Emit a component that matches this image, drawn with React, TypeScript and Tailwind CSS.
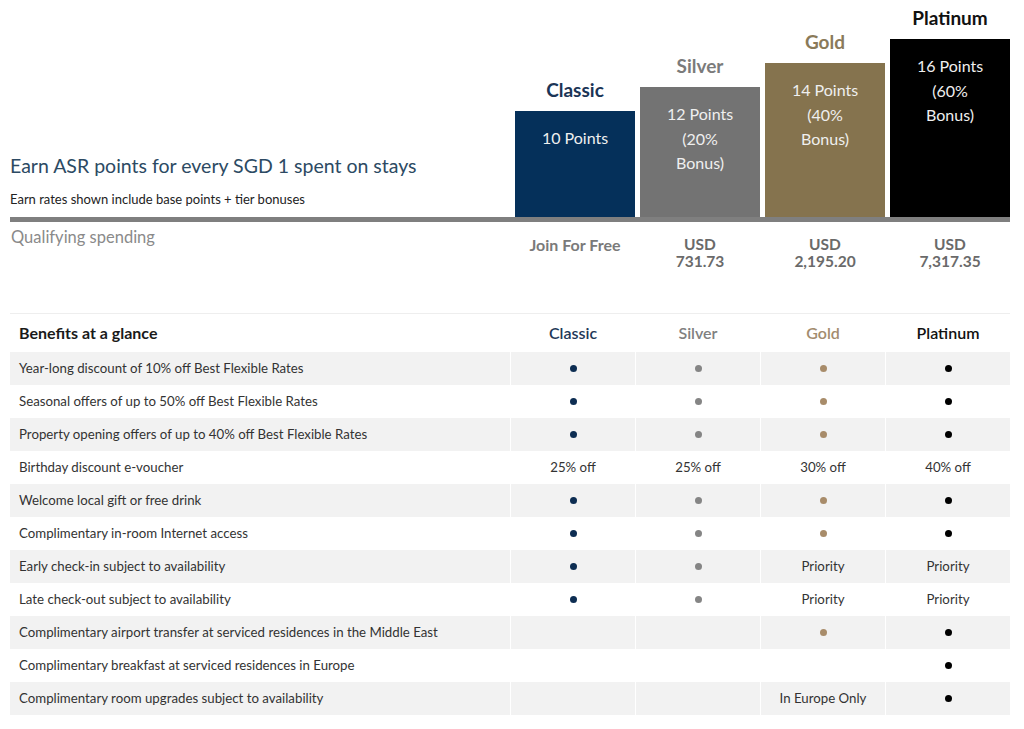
import React from "react";

type Tier = {
  name: string;
  label: string;
  head: string;
  bar: string;
  dot: string;
  points: string[];
  spend: string[];
};

const tiers: Tier[] = [
  {
    name: "Classic",
    label: "text-[#1b3556]",
    head: "text-[#1e3858]",
    bar: "bg-[#05305a] h-[106px]",
    dot: "bg-[#0d2d52]",
    points: ["10 Points"],
    spend: ["Join For Free"],
  },
  {
    name: "Silver",
    label: "text-[#7b7b7b]",
    head: "text-[#808080]",
    bar: "bg-[#737373] h-[130px]",
    dot: "bg-[#858585]",
    points: ["12 Points", "(20%", "Bonus)"],
    spend: ["USD", "731.73"],
  },
  {
    name: "Gold",
    label: "text-[#8a7a5a]",
    head: "text-[#a38c6e]",
    bar: "bg-[#85734e] h-[154px]",
    dot: "bg-[#a88c6a]",
    points: ["14 Points", "(40%", "Bonus)"],
    spend: ["USD", "2,195.20"],
  },
  {
    name: "Platinum",
    label: "text-[#111111]",
    head: "text-[#111111]",
    bar: "bg-[#000000] h-[178px]",
    dot: "bg-[#000000]",
    points: ["16 Points", "(60%", "Bonus)"],
    spend: ["USD", "7,317.35"],
  },
];

// true = dot, string = text, null = empty
type Cell = true | string | null;

const rows: { label: string; cells: Cell[] }[] = [
  { label: "Year-long discount of 10% off Best Flexible Rates", cells: [true, true, true, true] },
  { label: "Seasonal offers of up to 50% off Best Flexible Rates", cells: [true, true, true, true] },
  { label: "Property opening offers of up to 40% off Best Flexible Rates", cells: [true, true, true, true] },
  { label: "Birthday discount e-voucher", cells: ["25% off", "25% off", "30% off", "40% off"] },
  { label: "Welcome local gift or free drink", cells: [true, true, true, true] },
  { label: "Complimentary in-room Internet access", cells: [true, true, true, true] },
  { label: "Early check-in subject to availability", cells: [true, true, "Priority", "Priority"] },
  { label: "Late check-out subject to availability", cells: [true, true, "Priority", "Priority"] },
  { label: "Complimentary airport transfer at serviced residences in the Middle East", cells: [null, null, true, true] },
  { label: "Complimentary breakfast at serviced residences in Europe", cells: [null, null, null, true] },
  { label: "Complimentary room upgrades subject to availability", cells: [null, null, "In Europe Only", true] },
];

export default function App() {
  return (
    <div className="min-h-[729px] bg-white px-[10px] pt-[4px] font-['Lato','Liberation_Sans',sans-serif]">
      {/* earn chart */}
      <div className="grid grid-cols-[500px_repeat(4,125px)] items-end">
        <div className="flex flex-col pb-[9px]">
          <h2 className="text-[19.5px] leading-[24px] text-[#2c4a63]">Earn ASR points for every SGD 1 spent on stays</h2>
          <p className="mt-[13px] text-[13px] leading-[17px] text-[#222222]">Earn rates shown include base points + tier bonuses</p>
        </div>
        {tiers.map((t) => (
          <div key={t.name} className="flex flex-col pl-[5px]">
            <div className={`mb-[7px] h-[28px] text-center text-[19px] font-bold leading-[28px] ${t.label}`}>{t.name}</div>
            <div className={`w-[120px] pt-[15px] text-center text-[16px] leading-[24.5px] text-[#efefef] ${t.bar}`}>
              {t.points.map((p) => (
                <div key={p}>{p}</div>
              ))}
            </div>
          </div>
        ))}
      </div>
      <div className="h-[5px] w-[1000px] bg-[#7f7f7f]" />
      <div className="grid grid-cols-[500px_repeat(4,125px)] pb-[43px]">
        <div className="pl-px pt-[5px] text-[16.5px] leading-[20px] text-[#8a8a8a]">Qualifying spending</div>
        {tiers.map((t) => (
          <div key={t.name} className="pl-[5px] pt-[14px] text-center text-[15.5px] font-bold leading-[17px] text-[#6a6a6a]">
            {t.spend.map((s) => (
              <div key={s} className={t.name === "Classic" ? "text-[16px] text-[#7a7a7a]" : ""}>
                {s}
              </div>
            ))}
          </div>
        ))}
      </div>

      {/* benefits table */}
      <div className="w-[1000px] border-t border-[#eeeeee]">
        <div className="grid h-[38px] grid-cols-[500px_repeat(4,124px)] items-center gap-x-px">
          <div className="pl-[9px] text-[16px] font-bold text-[#1a1a1a]">Benefits at a glance</div>
          {tiers.map((t) => (
            <div key={t.name} className={`text-center text-[16px] font-semibold ${t.head}`}>
              {t.name}
            </div>
          ))}
        </div>
        {rows.map((r, i) => {
          const bg = i % 2 === 0 ? "bg-[#f2f2f2]" : "bg-white";
          return (
            <div key={r.label} className="grid h-[33px] grid-cols-[500px_repeat(4,124px)] gap-x-px text-[13.25px] text-[#333333]">
              <div className={`flex items-center pl-[9px] ${bg}`}>{r.label}</div>
              {r.cells.map((c, j) => (
                <div key={j} className={`flex items-center justify-center ${bg}`}>
                  {c === true ? (
                    <span className={`block h-[7px] w-[7px] rounded-full ${tiers[j].dot}`} />
                  ) : (
                    c
                  )}
                </div>
              ))}
            </div>
          );
        })}
      </div>
    </div>
  );
}
